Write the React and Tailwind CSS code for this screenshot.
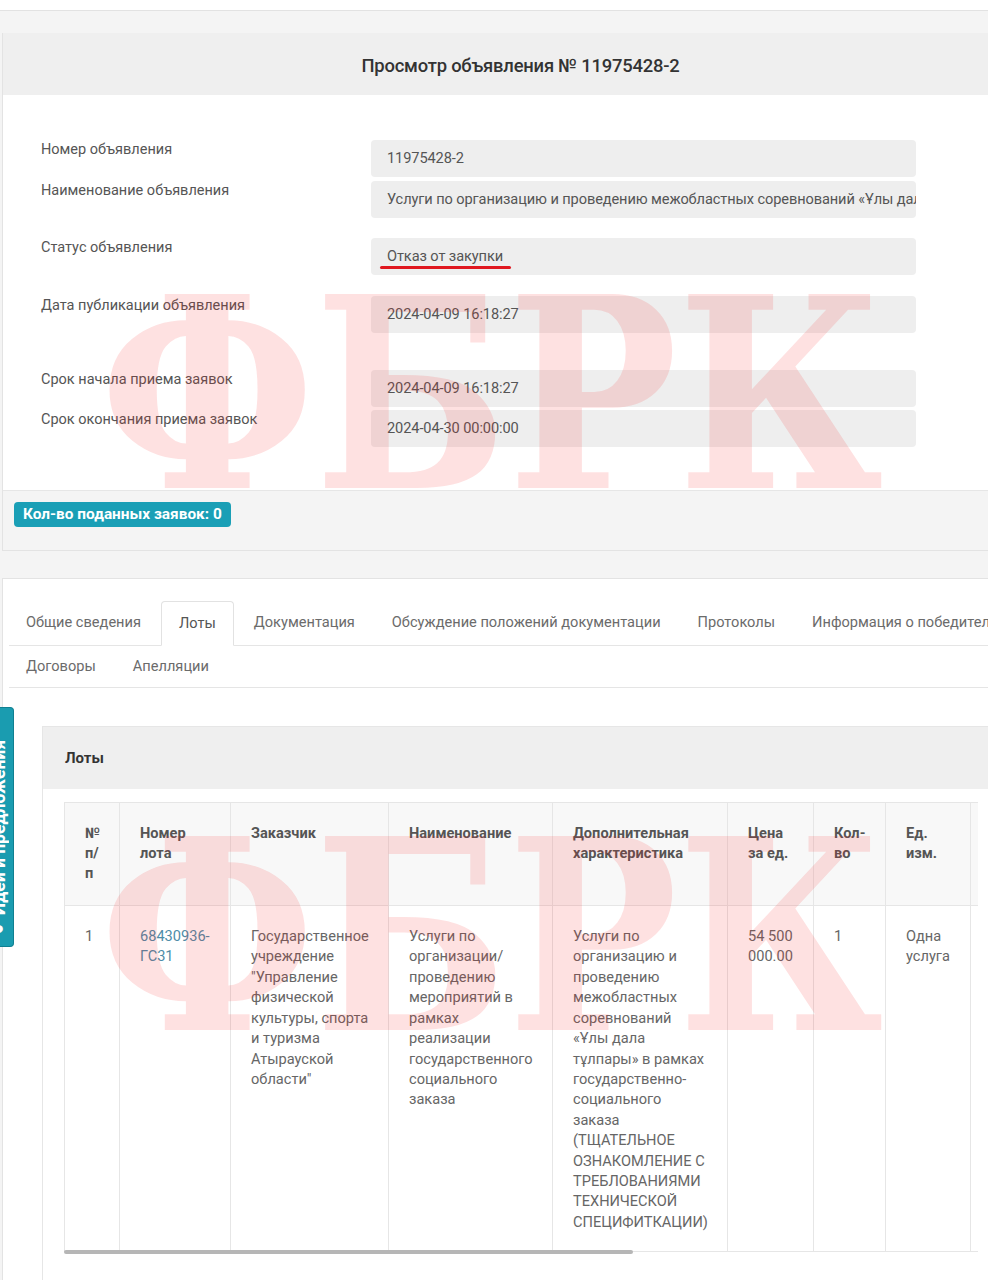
import React from "react";

function Row({ label, value, className = "", children }) {
  return (
    <div className={"flex items-start " + className}>
      <div className="w-[330px] text-[14.5px] leading-[20px] text-[#555]">{label}</div>
      <div className="relative w-[545px] h-[37px] rounded-[4px] bg-[#eeeeee] px-[16px] flex items-center text-[14.6px] tracking-[-0.1px] text-[#555] whitespace-nowrap overflow-hidden">
        {value}
        {children}
      </div>
    </div>
  );
}

function Lines({ items }) {
  return (
    <>
      {items.map((t, i) => (
        <div key={i}>{t}</div>
      ))}
    </>
  );
}

const th =
  "bg-[#f8f8f8] border border-[#e6e6e6] text-left align-top pl-[20px] pr-[4px] pt-[20px] pb-[22px] font-bold text-[14.6px] leading-[20px] text-[#555] whitespace-nowrap";
const td =
  "border border-[#e6e6e6] text-left align-top pl-[20px] pr-[4px] pt-[20px] pb-[19px] text-[14.6px] leading-[20.4px] text-[#666] whitespace-nowrap";

const tab = "px-[17px] mr-[3px] flex items-center text-[14.6px] text-[#6b6b6b]";

export default function App() {
  return (
    <div className="relative w-[988px] h-[1280px] overflow-hidden bg-[#f4f4f4] font-['Roboto',sans-serif]">
      <div className="h-[11px] bg-white border-b border-[#e2e2e2]" />
      <div className="pt-[22px] pl-[2px]">
        {/* Panel 1 */}
        <div className="bg-white border-l border-b border-[#e3e3e3]">
          <div className="h-[62px] bg-[#efefef] flex items-center justify-center pl-[50px] pt-[3px]">
            <h1 className="text-[18.4px] font-medium text-[#333] tracking-[-0.2px]">
              Просмотр объявления № 11975428-2
            </h1>
          </div>
          <div className="pt-[45px] pb-[43px] pl-[38px]">
            <Row label="Номер объявления" value="11975428-2" />
            <Row
              className="mt-[4px]"
              label="Наименование объявления"
              value="Услуги по организацию и проведению межобластных соревнований «Ұлы дала тұлпары»"
            />
            <Row className="mt-[20px]" label="Статус объявления" value="Отказ от закупки">
              <span className="absolute left-[9px] top-[28px] w-[131px] h-[3px] rounded-full bg-[#e01820]" />
            </Row>
            <Row className="mt-[21px]" label="Дата публикации объявления" value="2024-04-09 16:18:27" />
            <Row className="mt-[37px]" label="Срок начала приема заявок" value="2024-04-09 16:18:27" />
            <Row className="mt-[3px]" label="Срок окончания приема заявок" value="2024-04-30 00:00:00" />
          </div>
          <div className="bg-[#f4f4f4] border-t border-[#e6e6e6] pl-[11px] pt-[11px] pb-[23px]">
            <span className="inline-flex h-[25px] items-center px-[9px] rounded-[4px] bg-[#1a9fb6] text-white font-bold text-[15.4px]">
              Кол-во поданных заявок: 0
            </span>
          </div>
        </div>

        {/* Panel 2 */}
        <div className="mt-[27px] bg-white border-l border-t border-[#e3e3e3] pt-[22px] pl-[6px] h-[720px]">
          <div className="flex h-[45px] border-b border-[#e5e5e5] whitespace-nowrap">
            <div className={tab}>Общие сведения</div>
            <div className="px-[17px] mr-[3px] flex items-center text-[14.6px] text-[#555] bg-white border border-[#e2e2e2] border-b-white rounded-t-[4px] -mb-px">
              Лоты
            </div>
            <div className={tab}>Документация</div>
            <div className={tab}>Обсуждение положений документации</div>
            <div className={tab}>Протоколы</div>
            <div className={tab}>Информация о победителе</div>
          </div>
          <div className="flex h-[42px] border-b border-[#e5e5e5] whitespace-nowrap">
            <div className={tab}>Договоры</div>
            <div className={tab}>Апелляции</div>
          </div>

          {/* Lots card */}
          <div className="mt-[38px] ml-[33px] border-l border-t border-[#e6e6e6] h-[600px]">
            <div className="h-[62px] bg-[#efefef] pl-[22px] flex items-center font-bold text-[15px] text-[#333]">
              Лоты
            </div>
            <div className="pt-[13px] pl-[21px]">
              <div className="w-[914px] overflow-hidden">
                <table className="table-fixed border-collapse w-[1468px]">
                  <colgroup>
                    <col className="w-[55px]" />
                    <col className="w-[111px]" />
                    <col className="w-[158px]" />
                    <col className="w-[164px]" />
                    <col className="w-[175px]" />
                    <col className="w-[86px]" />
                    <col className="w-[72px]" />
                    <col className="w-[85px]" />
                    <col className="w-[150px]" />
                    <col className="w-[150px]" />
                    <col className="w-[262px]" />
                  </colgroup>
                  <thead>
                    <tr>
                      <th className={th}>
                        <Lines items={["№", "п/", "п"]} />
                      </th>
                      <th className={th}>
                        <Lines items={["Номер", "лота"]} />
                      </th>
                      <th className={th}>Заказчик</th>
                      <th className={th}>Наименование</th>
                      <th className={th}>
                        <Lines items={["Дополнительная", "характеристика"]} />
                      </th>
                      <th className={th}>
                        <Lines items={["Цена", "за ед."]} />
                      </th>
                      <th className={th}>
                        <Lines items={["Кол-", "во"]} />
                      </th>
                      <th className={th}>
                        <Lines items={["Ед.", "изм."]} />
                      </th>
                      <th className={th}>
                        <Lines items={["Плановый", "срок"]} />
                      </th>
                      <th className={th}>
                        <Lines items={["Сумма,", "тенге"]} />
                      </th>
                      <th className={th}>Статус лота</th>
                    </tr>
                  </thead>
                  <tbody>
                    <tr>
                      <td className={td}>1</td>
                      <td className={td}>
                        <div className="text-[#4d8ca8]">
                          <Lines items={["68430936-", "ГС31"]} />
                        </div>
                      </td>
                      <td className={td}>
                        <Lines
                          items={[
                            "Государственное",
                            "учреждение",
                            "\"Управление",
                            "физической",
                            "культуры, спорта",
                            "и туризма",
                            "Атырауской",
                            "области\"",
                          ]}
                        />
                      </td>
                      <td className={td}>
                        <Lines
                          items={[
                            "Услуги по",
                            "организации/",
                            "проведению",
                            "мероприятий в",
                            "рамках",
                            "реализации",
                            "государственного",
                            "социального",
                            "заказа",
                          ]}
                        />
                      </td>
                      <td className={td}>
                        <Lines
                          items={[
                            "Услуги по",
                            "организацию и",
                            "проведению",
                            "межобластных",
                            "соревнований",
                            "«Ұлы дала",
                            "тұлпары» в рамках",
                            "государственно-",
                            "социального",
                            "заказа",
                            "(ТЩАТЕЛЬНОЕ",
                            "ОЗНАКОМЛЕНИЕ С",
                            "ТРЕБЛОВАНИЯМИ",
                            "ТЕХНИЧЕСКОЙ",
                            "СПЕЦИФИТКАЦИИ)",
                          ]}
                        />
                      </td>
                      <td className={td}>
                        <Lines items={["54 500", "000.00"]} />
                      </td>
                      <td className={td}>1</td>
                      <td className={td}>
                        <Lines items={["Одна", "услуга"]} />
                      </td>
                      <td className={td}></td>
                      <td className={td}></td>
                      <td className={td}></td>
                    </tr>
                  </tbody>
                </table>
                <div className="-mt-[2px] h-[4px] w-[569px] bg-[#b6b6b6] rounded-[2px]" />
              </div>
            </div>
          </div>
        </div>
      </div>

      {/* Side feedback tab */}
      <div className="absolute left-0 top-[707px] w-[14px] h-[240px] bg-[#1a9cb0] border-y border-r border-[#0f7f91] rounded-r-[4px] overflow-hidden">
        <div className="absolute left-[-9px] bottom-[6px] [writing-mode:vertical-rl] rotate-180 text-white font-bold text-[17.5px] leading-[17px] whitespace-nowrap">
          ● Идеи и предложения
        </div>
      </div>

      {/* Watermarks */}
      <div className="pointer-events-none absolute left-[100px] top-[262px] origin-left scale-x-[0.85] font-['DejaVu_Serif',serif] font-bold text-[266px] leading-none text-[rgba(245,20,20,0.13)] whitespace-nowrap">
        ФБРК
      </div>
      <div className="pointer-events-none absolute left-[100px] top-[804px] origin-left scale-x-[0.85] font-['DejaVu_Serif',serif] font-bold text-[266px] leading-none text-[rgba(245,20,20,0.13)] whitespace-nowrap">
        ФБРК
      </div>
    </div>
  );
}
